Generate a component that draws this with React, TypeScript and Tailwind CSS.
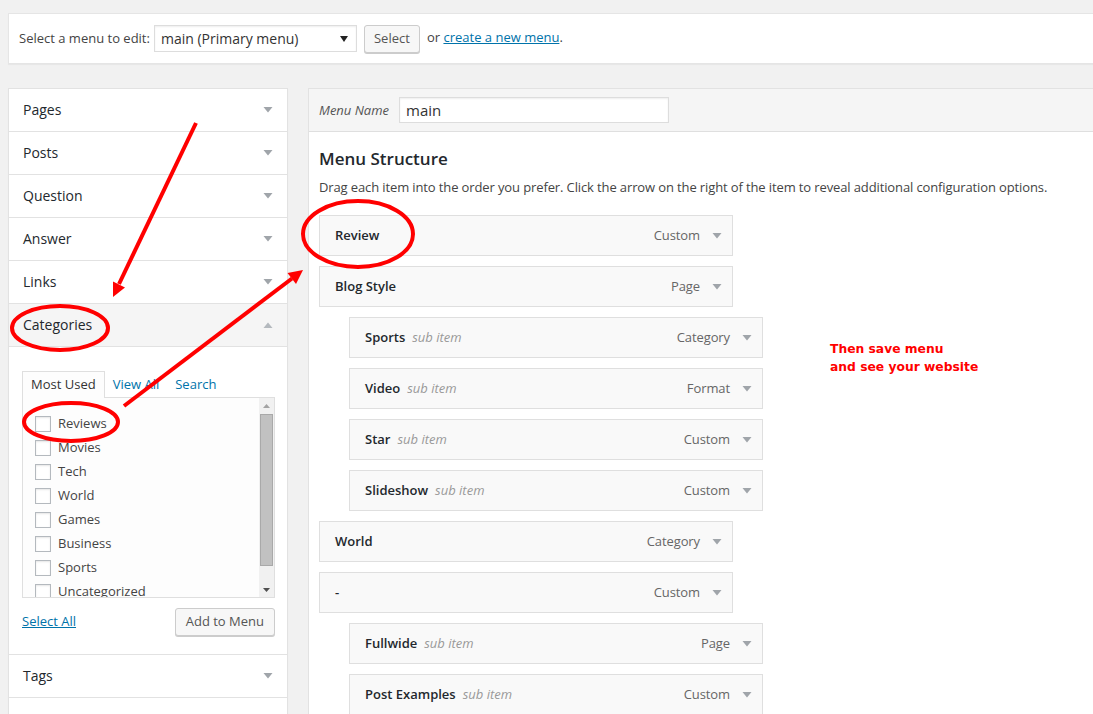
const sections = ['Pages', 'Posts', 'Question', 'Answer', 'Links']

const categories = ['Reviews', 'Movies', 'Tech', 'World', 'Games', 'Business', 'Sports', 'Uncategorized']

interface MenuItem {
  title: string
  type: string
  sub?: boolean
}

const menuItems: MenuItem[] = [
  { title: 'Review', type: 'Custom' },
  { title: 'Blog Style', type: 'Page' },
  { title: 'Sports', type: 'Category', sub: true },
  { title: 'Video', type: 'Format', sub: true },
  { title: 'Star', type: 'Custom', sub: true },
  { title: 'Slideshow', type: 'Custom', sub: true },
  { title: 'World', type: 'Category' },
  { title: '-', type: 'Custom' },
  { title: 'Fullwide', type: 'Page', sub: true },
  { title: 'Post Examples', type: 'Custom', sub: true },
]

function Caret({ up = false, color = '#a0a5aa' }: { up?: boolean, color?: string }) {
  return (
    <svg width="10" height="6" viewBox="0 0 10 6" className="shrink-0">
      {up
        ? <polygon points="0.5,6 9.5,6 5,0.5" fill={color} />
        : <polygon points="0.5,0 9.5,0 5,5.5" fill={color} />}
    </svg>
  )
}

function AccordionRow({ title }: { title: string }) {
  return (
    <div className="flex h-[43px] items-center justify-between border-b border-[#e2e2e2] pl-[14px] pr-[14px]">
      <span className="-mt-[2px] text-[14px] text-[#23282d]">{title}</span>
      <Caret />
    </div>
  )
}

export default function App() {
  return (
    <div className="relative h-[714px] w-[1093px] overflow-hidden bg-[#f1f1f1] font-['Open_Sans',sans-serif] text-[13px] text-[#444]">
      {/* Barra de seleção de menu */}
      <div className="ml-2 mt-[13px] flex h-[51px] w-[1200px] items-center border border-[#e5e5e5] bg-white pl-[10px] shadow-[0_1px_1px_rgba(0,0,0,0.04)]">
        <span className="text-[13px] text-[#444]">Select a menu to edit:</span>
        <div className="ml-[4px] flex h-[27px] w-[203px] items-center justify-between border border-[#ddd] bg-white pl-[6px] pr-[8px] shadow-[inset_0_1px_2px_rgba(0,0,0,0.07)]">
          <span className="text-[14px] text-[#333]">main (Primary menu)</span>
          <svg width="8" height="6" viewBox="0 0 8 6"><polygon points="0,0 8,0 4,6" fill="#222" /></svg>
        </div>
        <button className="ml-[7px] h-[28px] w-[56px] rounded-[3px] border border-[#ccc] bg-[#f7f7f7] text-[13px] text-[#555] shadow-[0_1px_0_#ccc]">Select</button>
        <span className="ml-[7px] -mt-[1px] text-[13px] text-[#444]">
          or <span className="text-[#0073aa] underline">create a new menu</span>.
        </span>
      </div>

      <div className="mt-[24px] flex">
        {/* Coluna esquerda */}
        <div className="ml-2 w-[280px] shrink-0 border-x border-t border-[#e2e2e2] bg-white shadow-[0_1px_1px_rgba(0,0,0,0.04)]">
          {sections.map((s) => <AccordionRow key={s} title={s} />)}
          <div className="flex h-[43px] items-center justify-between border-b border-[#e2e2e2] bg-[#f5f5f5] pl-[14px] pr-[14px]">
            <span className="-mt-[2px] text-[14px] text-[#23282d]">Categories</span>
            <Caret up color="#b4b9be" />
          </div>

          {/* Conteúdo Categories */}
          <div className="h-[308px] border-b border-[#e2e2e2] px-[13px] pt-[24px]">
            <div className="flex h-[26px]">
              <div className="relative z-10 flex h-[27px] items-center border-x border-t border-[#dfdfdf] bg-[#fdfdfd] px-[8px] text-[#333]">Most Used</div>
              <div className="flex h-[27px] items-center px-[8px] text-[#0073aa]">View All</div>
              <div className="flex h-[27px] items-center px-[8px] text-[#0073aa]">Search</div>
            </div>
            <div className="flex h-[201px] w-[253px] border border-[#dfdfdf] bg-[#fdfdfd]">
              <div className="flex-1 overflow-hidden pl-[12px] pt-[14px]">
                {categories.map((c) => (
                  <div key={c} className="flex h-[24px] items-center">
                    <span className="h-[16px] w-[16px] shrink-0 border border-[#b4b9be] bg-white shadow-[inset_0_1px_2px_rgba(0,0,0,0.1)]" />
                    <span className="ml-[7px] text-[#444]">{c}</span>
                  </div>
                ))}
              </div>
              <div className="flex w-[15px] flex-col items-center bg-[#f1f1f1]">
                <div className="flex h-[16px] items-center">
                  <svg width="7" height="4" viewBox="0 0 7 4"><polygon points="0,4 7,4 3.5,0" fill="#a3a3a3" /></svg>
                </div>
                <div className="h-[152px] w-[13px] border border-[#a9a9a9] bg-[#c1c1c1]" />
                <div className="flex flex-1 items-end pb-[5px]">
                  <svg width="7" height="4" viewBox="0 0 7 4"><polygon points="0,0 7,0 3.5,4" fill="#505050" /></svg>
                </div>
              </div>
            </div>
            <div className="mt-[10px] flex w-[253px] items-center justify-between">
              <span className="text-[#0073aa] underline">Select All</span>
              <button className="h-[28px] rounded-[3px] border border-[#ccc] bg-[#f7f7f7] px-[10px] text-[13px] text-[#555] shadow-[0_1px_0_#ccc]">Add to Menu</button>
            </div>
          </div>
          <AccordionRow title="Tags" />
          <div className="h-[40px]" />
        </div>

        {/* Coluna direita */}
        <div className="ml-[20px] w-[820px] shrink-0 border-l border-t border-[#e2e2e2] bg-white">
          <div className="flex h-[43px] items-center border-b border-[#dfdfdf] bg-[#f5f5f5] pl-[10px]">
            <span className="mt-[2px] w-[80px] italic text-[#555]">Menu Name</span>
            <div className="flex h-[26px] w-[270px] items-center border border-[#ddd] bg-white pl-[6px] text-[15px] text-[#333] shadow-[inset_0_1px_2px_rgba(0,0,0,0.07)]">main</div>
          </div>
          <div className="pl-[10px] pt-[15px]">
            <h3 className="text-[17px] font-semibold leading-[24px] text-[#23282d]">Menu Structure</h3>
            <p className="mt-[6px] leading-[20px] tracking-[-0.12px] text-[#444]">Drag each item into the order you prefer. Click the arrow on the right of the item to reveal additional configuration options.</p>
            <div className="mt-[18px]">
              {menuItems.map((m, i) => (
                <div key={i} className={`mb-[10px] flex h-[41px] w-[414px] items-center justify-between border border-[#dfdfdf] bg-[#f9f9f9] pl-[15px] pr-[10px] ${m.sub ? 'ml-[30px]' : ''}`}>
                  <div className="flex items-center">
                    <span className="font-semibold text-[#23282d]">{m.title}</span>
                    {m.sub && <span className="ml-[7px] italic text-[#999]">sub item</span>}
                  </div>
                  <div className="flex items-center">
                    <span className="mr-[12px] tracking-[-0.1px] text-[#666]">{m.type}</span>
                    <Caret />
                  </div>
                </div>
              ))}
            </div>
          </div>
        </div>
      </div>

      {/* Anotações em vermelho */}
      <div className="absolute left-[830px] top-[340px] font-['DejaVu_Sans',sans-serif] text-[12.3px] font-bold leading-[18px] text-[#ff0000]">
        <div>Then save menu</div>
        <div>and see your website</div>
      </div>
      <svg className="pointer-events-none absolute inset-0" width="1093" height="714" viewBox="0 0 1093 714">
        <g stroke="#ff0000" strokeWidth="4" fill="none">
          <ellipse cx="60" cy="328" rx="48" ry="22" />
          <ellipse cx="71" cy="422" rx="47" ry="19" />
          <ellipse cx="358" cy="234" rx="55" ry="33" />
          <line x1="196" y1="123" x2="119" y2="284" />
          <line x1="124" y1="406" x2="292" y2="278.5" />
        </g>
        <g fill="#ff0000">
          <polygon points="113,297 125,287.5 113,281.5" />
          <polygon points="303,270 296,284 287.5,273" />
        </g>
      </svg>
    </div>
  )
}
